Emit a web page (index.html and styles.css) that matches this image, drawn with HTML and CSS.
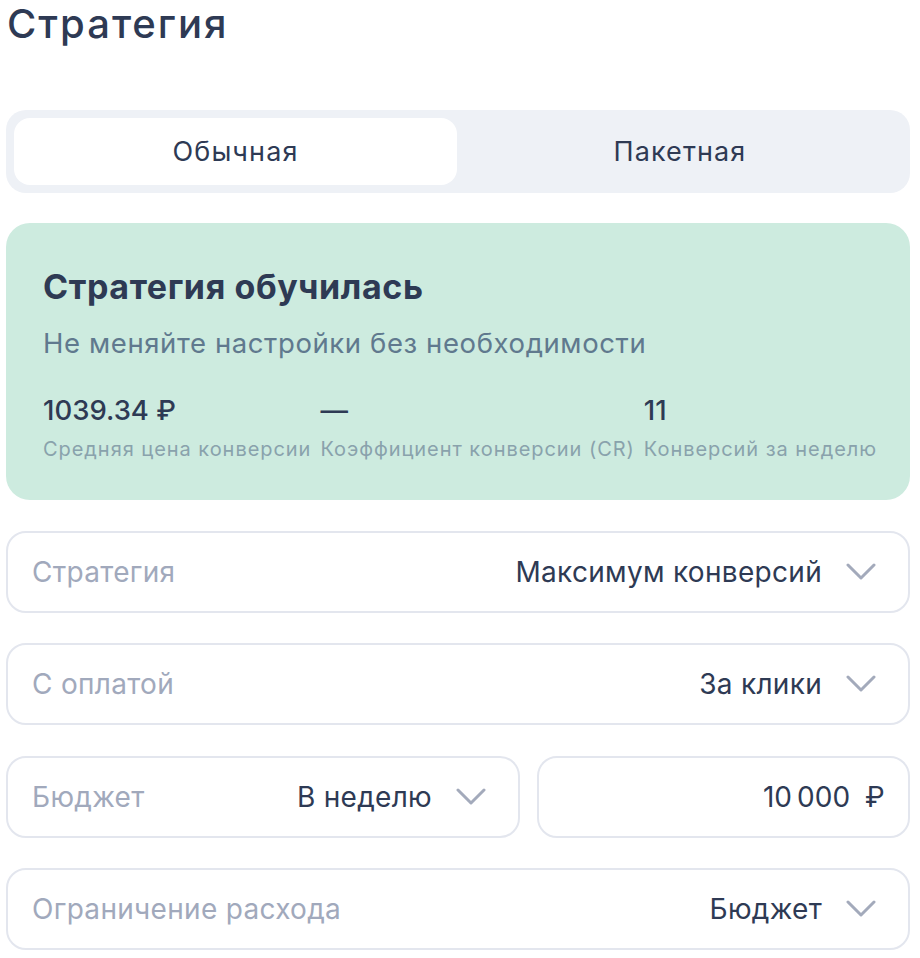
FILE: index.html
```html
<!DOCTYPE html>
<html lang="ru">
<head>
<meta charset="utf-8">
<title>Стратегия</title>
<link rel="stylesheet" href="styles.css">
</head>
<body>
<main class="page">
  <h1 class="page-title">Стратегия</h1>

  <div class="segmented">
    <button class="seg-item seg-item--active">Обычная</button>
    <button class="seg-item">Пакетная</button>
  </div>

  <section class="status-card">
    <h2 class="status-title">Стратегия обучилась</h2>
    <p class="status-sub">Не меняйте настройки без необходимости</p>
    <div class="stats">
      <div class="stat">
        <div class="stat-value">1039.34 ₽</div>
        <div class="stat-label">Средняя цена конверсии</div>
      </div>
      <div class="stat">
        <div class="stat-value">—</div>
        <div class="stat-label">Коэффициент конверсии (CR)</div>
      </div>
      <div class="stat">
        <div class="stat-value">11</div>
        <div class="stat-label">Конверсий за неделю</div>
      </div>
    </div>
  </section>

  <div class="field">
    <span class="field-label">Стратегия</span>
    <span class="field-value">Максимум конверсий</span>
    <svg class="chevron" viewBox="0 0 30 20" width="30" height="20"><path d="M2 3 L15 16 L28 3" /></svg>
  </div>

  <div class="field">
    <span class="field-label">С оплатой</span>
    <span class="field-value">За клики</span>
    <svg class="chevron" viewBox="0 0 30 20" width="30" height="20"><path d="M2 3 L15 16 L28 3" /></svg>
  </div>

  <div class="field-row">
    <div class="field">
      <span class="field-label">Бюджет</span>
      <span class="field-value">В неделю</span>
      <svg class="chevron" viewBox="0 0 30 20" width="30" height="20"><path d="M2 3 L15 16 L28 3" /></svg>
    </div>
    <div class="field field--input">
      <span class="field-value">10&#8239;000</span>
      <span class="currency">₽</span>
    </div>
  </div>

  <div class="field">
    <span class="field-label">Ограничение расхода</span>
    <span class="field-value">Бюджет</span>
    <svg class="chevron" viewBox="0 0 30 20" width="30" height="20"><path d="M2 3 L15 16 L28 3" /></svg>
  </div>
</main>
</body>
</html>
```

FILE: styles.css
```css
* { box-sizing: border-box; }

html, body {
  margin: 0;
  padding: 0;
  background: #ffffff;
}

body {
  font-family: Inter, "Noto Sans", "DejaVu Sans", sans-serif;
  color: #2e3a54;
}

.page {
  width: 920px;
  padding: 0 10px 0 6px;
  display: flex;
  flex-direction: column;
  gap: 30.5px;
}

.page-title {
  margin: 0 0 31.5px 1px;
  font-size: 40px;
  line-height: 48px;
  font-weight: 500;
  letter-spacing: 2px;
  color: #2e3a54;
}

.segmented {
  height: 82.5px;
  background: #eef1f6;
  border-radius: 20px;
  padding: 8px;
  display: grid;
  grid-template-columns: 1fr 1fr;
}

.seg-item {
  border: none;
  background: transparent;
  font-family: inherit;
  font-size: 27px;
  letter-spacing: 1.1px;
  color: #2e3a54;
  border-radius: 16px;
  padding: 0;
}

.seg-item--active {
  background: #ffffff;
  margin-right: 1px;
}

.status-card {
  height: 277px;
  background: #cdebdf;
  border-radius: 24px;
  padding: 44px 30px 0 37px;
}

.status-title {
  margin: 0;
  font-size: 34px;
  line-height: 40px;
  font-weight: 700;
  letter-spacing: 0.6px;
  color: #2e3a54;
}

.status-sub {
  margin: 19px 0 0;
  font-size: 27.5px;
  line-height: 34px;
  letter-spacing: 0.6px;
  color: #60798e;
}

.stats {
  margin-top: 33px;
  display: flex;
  gap: 9px;
}

.stat-value {
  font-size: 27.5px;
  line-height: 34px;
  font-weight: 500;
  color: #2e3a54;
}

.stat-label {
  margin-top: 10px;
  font-size: 20px;
  line-height: 24px;
  letter-spacing: 0.95px;
  color: #89a2ac;
}

.field {
  height: 82px;
  border: 2px solid #e3e6ee;
  border-radius: 20px;
  padding: 0 32px 0 24px;
  display: flex;
  align-items: center;
  font-size: 28px;
  letter-spacing: 0.3px;
}

.field-label {
  color: #a1a9bc;
  flex: 1;
}

.field-value {
  color: #2e3a54;
}

.chevron {
  margin-left: 24px;
  fill: none;
  stroke: #a3aabb;
  stroke-width: 3;
  stroke-linecap: round;
  stroke-linejoin: round;
}

.field-row {
  display: grid;
  grid-template-columns: 514px 1fr;
  gap: 17px;
}

.field--input {
  justify-content: flex-end;
  padding-right: 23px;
}

.currency {
  margin-left: 15px;
  color: #2e3a54;
}
```
